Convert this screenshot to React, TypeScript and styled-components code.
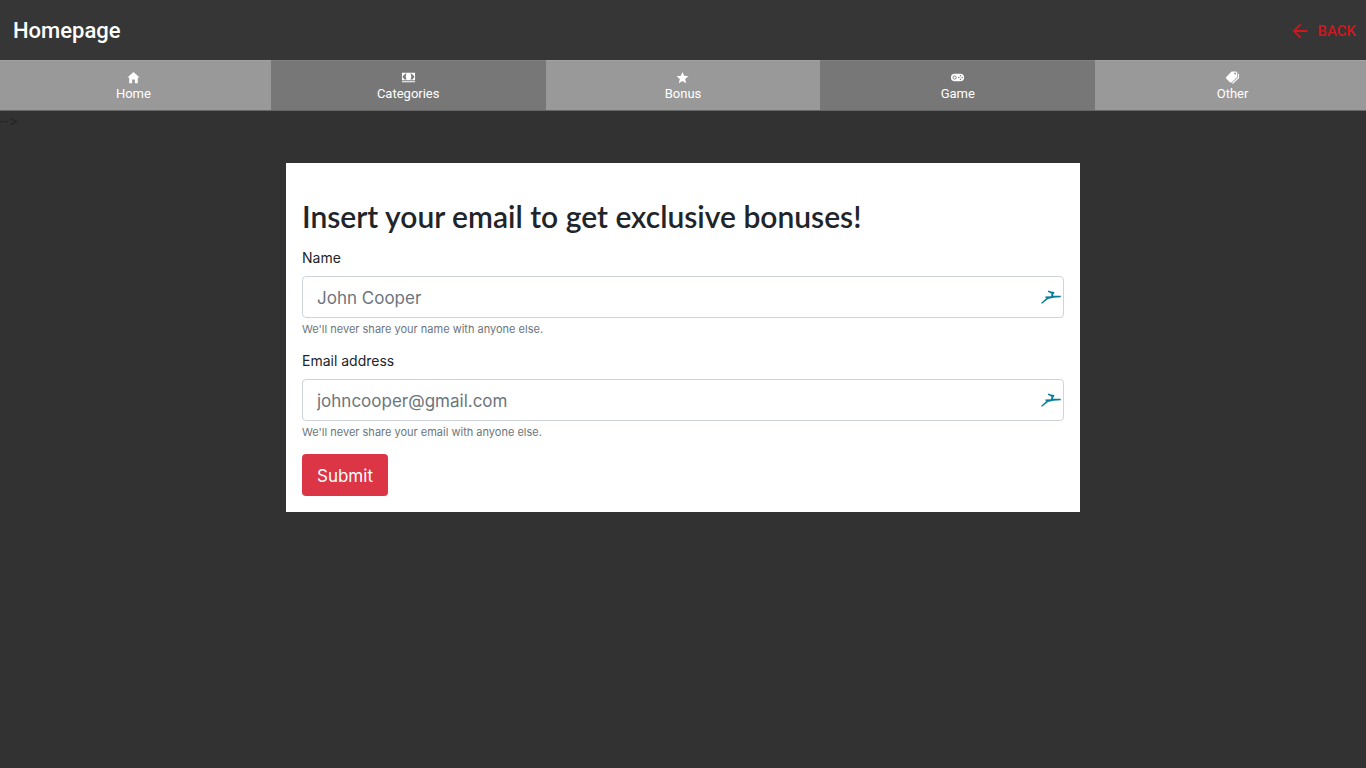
import React from "react";
import styled, { createGlobalStyle } from "styled-components";
import {
  IoMdArrowBack,
  IoMdCash,
  IoMdHome,
  IoMdPricetags,
  IoMdStar,
} from "react-icons/io";

const GlobalStyle = createGlobalStyle`
  *, *::before, *::after { box-sizing: border-box; }
  body {
    margin: 0;
    min-height: 100vh;
    overflow-x: hidden;
    background: #323232;
    color: #212529;
    font-family: Inter, "Liberation Sans", sans-serif;
    font-size: 14px;
    line-height: 20px;
  }
`;

const Header = styled.header`
  display: flex;
  align-items: center;
  justify-content: space-between;
  height: 60px;
  padding: 1px 10px 0 13px;
  background: #363636;
  font-family: Roboto, sans-serif;
`;

const Title = styled.h1`
  margin: 0;
  color: #fff;
  font-size: 22px;
  font-weight: 500;
  line-height: 28px;
`;

const BackLink = styled.a`
  display: flex;
  align-items: center;
  gap: 6px;
  color: #d0161e;
  font-size: 15px;
  font-weight: 500;
  line-height: 20px;
  text-decoration: none;

  svg { width: 22px; height: 22px; }
`;

const TabBar = styled.nav`
  display: grid;
  grid-template-columns: repeat(5, 1fr);
  margin: 0 -4px;
`;

const Tab = styled.a<{ $dark?: boolean }>`
  display: flex;
  flex-direction: column;
  align-items: center;
  height: 51px;
  padding-top: 9px;
  border-top: 1px solid ${(p) => (p.$dark ? "#808080" : "#a2a2a2")};
  border-bottom: 1px solid #666;
  background: ${(p) => (p.$dark ? "#777" : "#999")};
  color: #fff;
  font-family: Roboto, sans-serif;
  font-size: 13px;
  line-height: 18px;
  text-decoration: none;

  svg { width: 15px; height: 15px; flex: none; }
`;

const StrayText = styled.div`
  height: 20px;
  margin-left: -4px;
  font-feature-settings: "calt" 0, "liga" 0;
`;

const Card = styled.main`
  width: calc(100% - 32px);
  max-width: 794px;
  margin: 32px auto;
  padding: 32px 16px 16px;
  background: #fff;
`;

const Heading = styled.h2`
  margin: 0 0 11px;
  font-family: Lato, sans-serif;
  font-size: 30px;
  font-weight: 600;
  line-height: 42px;
`;

const Field = styled.div`
  display: flex;
  flex-direction: column;
  margin-bottom: 12px;
`;

const Label = styled.label`
  margin-bottom: 8px;
`;

const InputWrap = styled.div`
  position: relative;
`;

const Input = styled.input`
  display: block;
  width: 100%;
  height: 42px;
  padding: 2px 32px 0 14px;
  border: 1px solid #ced4da;
  border-radius: 4px;
  background: #fff;
  color: #495057;
  font: inherit;
  font-size: 17px;

  &::placeholder { color: #6c757d; opacity: 1; }
`;

const FillMark = styled.svg`
  position: absolute;
  top: 12px;
  right: 2px;
  width: 22px;
  height: 18px;
`;

const Hint = styled.small`
  margin-top: 1px;
  color: #6c757d;
  font-size: 11px;
`;

const Submit = styled.button`
  display: block;
  height: 42px;
  padding: 2px 15px 0;
  border: 0;
  border-radius: 4px;
  background: #dc3545;
  color: #fff;
  font: inherit;
  font-size: 17px;
`;

function GamepadIcon() {
  return (
    <svg viewBox="0 0 16 16" aria-hidden="true">
      <rect x="1" y="4" width="14" height="8" rx="4" fill="currentColor" />
      <circle cx="4.9" cy="8" r="1.7" fill="none" stroke="#777" strokeWidth="1" />
      <g fill="#777">
        <circle cx="11.2" cy="6.2" r="0.8" />
        <circle cx="11.2" cy="9.8" r="0.8" />
        <circle cx="9.4" cy="8" r="0.8" />
        <circle cx="13" cy="8" r="0.8" />
      </g>
    </svg>
  );
}

const tabs = [
  { label: "Home", Icon: IoMdHome },
  { label: "Categories", Icon: IoMdCash },
  { label: "Bonus", Icon: IoMdStar },
  { label: "Game", Icon: GamepadIcon },
  { label: "Other", Icon: IoMdPricetags },
];

interface TextFieldProps {
  id: string;
  label: string;
  type: string;
  placeholder: string;
  hint: string;
}

function TextField({ id, label, type, placeholder, hint }: TextFieldProps) {
  return (
    <Field>
      <Label htmlFor={id}>{label}</Label>
      <InputWrap>
        <Input id={id} type={type} placeholder={placeholder} aria-describedby={`${id}-hint`} />
        <FillMark viewBox="0 0 22 18" aria-hidden="true">
          <path
            d="M1 15 6.5 9.9 5.2 9.6 5.3 8.6 11 8.3 11.5 5.8 7.8 3.8 8.3 2.4 11 3.4 14.4 4.1 14 5.8 13.3 6 13.1 7.7 20.8 7.8 20.8 9.2 13.4 9.8 8 10.9 2 15.8Z"
            fill="#087f98"
          />
        </FillMark>
      </InputWrap>
      <Hint id={`${id}-hint`}>{hint}</Hint>
    </Field>
  );
}

export default function App() {
  return (
    <>
      <GlobalStyle />
      <Header>
        <Title>Homepage</Title>
        <BackLink href="#back">
          <IoMdArrowBack />
          BACK
        </BackLink>
      </Header>
      <TabBar>
        {tabs.map(({ label, Icon }, i) => (
          <Tab key={label} href={`#${label.toLowerCase()}`} $dark={i % 2 === 1}>
            <Icon />
            {label}
          </Tab>
        ))}
      </TabBar>
      <StrayText>{"-->"}</StrayText>
      <Card>
        <Heading>Insert your email to get exclusive bonuses!</Heading>
        <form onSubmit={(e) => e.preventDefault()}>
          <TextField
            id="name"
            label="Name"
            type="text"
            placeholder="John Cooper"
            hint="We'll never share your name with anyone else."
          />
          <TextField
            id="email"
            label="Email address"
            type="email"
            placeholder="johncooper@gmail.com"
            hint="We'll never share your email with anyone else."
          />
          <Submit type="submit">Submit</Submit>
        </form>
      </Card>
    </>
  );
}
